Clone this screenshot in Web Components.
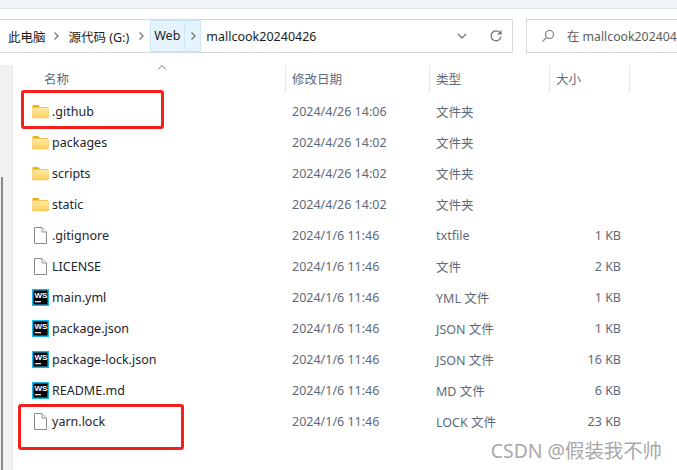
<!DOCTYPE html>
<html>
<head>
<meta charset="utf-8">
<style>
  html, body { margin: 0; padding: 0; background: #fff; }
  body { width: 677px; height: 470px; overflow: hidden; font-family: "Noto Sans", "Noto Sans CJK SC", sans-serif; }
</style>
</head>
<body>
<explorer-window>
  <nav-bar slot="nav" folder="mallcook20240426"></nav-bar>
  <file-list slot="list">
    <file-row icon="folder" name=".github" date="2024/4/26 14:06" type="文件夹"></file-row>
    <file-row icon="folder" name="packages" date="2024/4/26 14:02" type="文件夹"></file-row>
    <file-row icon="folder" name="scripts" date="2024/4/26 14:02" type="文件夹"></file-row>
    <file-row icon="folder" name="static" date="2024/4/26 14:02" type="文件夹"></file-row>
    <file-row icon="file" name=".gitignore" date="2024/1/6 11:46" type="txtfile" size="1 KB"></file-row>
    <file-row icon="file" name="LICENSE" date="2024/1/6 11:46" type="文件" size="2 KB"></file-row>
    <file-row icon="ws" name="main.yml" date="2024/1/6 11:46" type="YML 文件" size="1 KB"></file-row>
    <file-row icon="ws" name="package.json" date="2024/1/6 11:46" type="JSON 文件" size="1 KB"></file-row>
    <file-row icon="ws" name="package-lock.json" date="2024/1/6 11:46" type="JSON 文件" size="16 KB"></file-row>
    <file-row icon="ws" name="README.md" date="2024/1/6 11:46" type="MD 文件" size="6 KB"></file-row>
    <file-row icon="file" name="yarn.lock" date="2024/1/6 11:46" type="LOCK 文件" size="23 KB"></file-row>
  </file-list>
  <red-mark style="left:21px;top:90px;width:143px;height:39px"></red-mark>
  <red-mark style="left:18px;top:404px;width:166px;height:46px"></red-mark>
  <water-mark>CSDN @假装我不帅</water-mark>
</explorer-window>

<script>
class ExplorerWindow extends HTMLElement {
    constructor() {
        super();
        this.attachShadow({ mode: 'open' });
        this.shadowRoot.innerHTML = `
            <style>
                :host { display: block; position: relative; width: 677px; height: 470px; overflow: hidden; background: #fff; }
                .strip { height: 8px; background: #eff4f9; border-bottom: 1px solid #dde4e8; }
                .nav { padding-top: 10px; }
                .body { display: flex; height: 405px; margin-top: 12px; }
                .side { width: 12px; flex: none; background: #f1f1f1; border-right: 1px solid #ececec; position: relative; }
                .thumb { position: absolute; left: 1px; top: 112px; bottom: 0; width: 2px; background: #8b8b8b; }
                .list { flex: 1; min-width: 0; }
            </style>
            <div class="strip"></div>
            <div class="nav"><slot name="nav"></slot></div>
            <div class="body">
                <div class="side"><div class="thumb"></div></div>
                <div class="list"><slot name="list"></slot></div>
            </div>
            <slot></slot>
        `;
    }
}

class NavBar extends HTMLElement {
    constructor() {
        super();
        this.attachShadow({ mode: 'open' });
    }

    connectedCallback() {
        const folder = this.getAttribute('folder');
        const chevron = (cls) => `<svg class="sep ${cls}" width="8" height="10" viewBox="0 0 8 10"><path d="M2.5 1.5 6 5 2.5 8.500" fill="none" stroke="#777" stroke-width="1.300"/></svg>`;
        this.shadowRoot.innerHTML = `
            <style>
                :host { display: flex; gap: 13px; height: 34px; font-size: 12.5px; color: #1c1c1c; }
                .path { flex: none; width: 513px; box-sizing: border-box; display: flex; align-items: center; border: 1px solid #d9d9d9; border-left: none; padding-left: 8px; }
                .crumb { display: flex; align-items: center; height: 32px; }
                .sep { flex: none; }
                .a { margin: 0 9px 0 6px; }
                .b { margin: 0 5px 0 8px; }
                .c { margin: 0 4px; }
                .web { display: flex; align-items: center; height: 32px; background: #e5f3fd; box-shadow: inset 0 0 0 1px #cce8fb; }
                .web span { padding: 0 4px; border-right: 1px solid #cce8fb; line-height: 32px; }
                .current { margin-left: 5px; }
                .right { margin-left: auto; display: flex; align-items: center; gap: 22px; padding-right: 9px; }
                .search { flex: 1; min-width: 0; box-sizing: border-box; display: flex; align-items: center; gap: 12px; border: 1px solid #d9d9d9; border-right: none; padding-left: 14px; white-space: nowrap; overflow: hidden; color: #5c5c5c; font-size: 12.3px; }
                .search svg { flex: none; }
            </style>
            <div class="path">
                <span class="crumb">此电脑</span>${chevron('a')}
                <span class="crumb">源代码 (G:)</span>${chevron('b')}
                <div class="web"><span>Web</span>${chevron('c')}</div>
                <span class="current">${folder}</span>
                <div class="right">
                    <svg width="10" height="8" viewBox="0 0 10 8"><path d="M1 2 5 6 9 2" fill="none" stroke="#666" stroke-width="1.100"/></svg>
                    <svg width="14" height="14" viewBox="0 0 14 14"><path d="M12 7.500A5 5 0 1 1 10.500 3.200L12 4.700M12 1.300V4.800H8.700" fill="none" stroke="#6e6e6e" stroke-width="1.200"/></svg>
                </div>
            </div>
            <div class="search">
                <svg width="14" height="14" viewBox="0 0 14 14"><circle cx="8.500" cy="5.500" r="4" fill="none" stroke="#777" stroke-width="1.100"/><path d="M5.500 8.500 1.500 12.500" stroke="#a98c6e" stroke-width="1.300"/></svg>
                <span>在 mallcook202404</span>
            </div>
        `;
    }
}

class FileList extends HTMLElement {
    constructor() {
        super();
        this.attachShadow({ mode: 'open' });
        this.shadowRoot.innerHTML = `
            <style>
                :host { display: block; font-size: 12.5px; color: #5f6a78; }
                .head { display: grid; grid-template-columns: 273px 144px 120px 80px; height: 27px; position: relative; }
                .col { display: flex; align-items: center; border-right: 1px solid #e6e6e6; padding-left: 6px; }
                .col:first-of-type { padding-left: 31px; }
                .sort { position: absolute; left: 144px; top: -1px; }
                .rows { padding-top: 4px; }
            </style>
            <div class="head">
                <div class="col">名称</div>
                <div class="col">修改日期</div>
                <div class="col">类型</div>
                <div class="col">大小</div>
                <svg class="sort" width="10" height="7" viewBox="0 0 10 7"><path d="M1 5.500 5 1.500 9 5.500" fill="none" stroke="#777" stroke-width="1"/></svg>
            </div>
            <div class="rows"><slot></slot></div>
        `;
    }
}

class FileRow extends HTMLElement {
    constructor() {
        super();
        this.attachShadow({ mode: 'open' });
    }

    connectedCallback() {
        const attr = (n) => this.getAttribute(n) || '';
        this.shadowRoot.innerHTML = `
            <style>
                :host { display: grid; grid-template-columns: 273px 144px 120px 71px; height: 31px; align-items: center; white-space: nowrap; }
                .name { display: flex; align-items: center; gap: 3px; padding-left: 19px; color: #1c2530; }
                .date { padding-left: 6px; }
                .type { padding-left: 6px; }
                .size { text-align: right; }
            </style>
            <div class="name"><file-icon kind="${attr('icon')}"></file-icon><span>${attr('name')}</span></div>
            <div class="date">${attr('date')}</div>
            <div class="type">${attr('type')}</div>
            <div class="size">${attr('size')}</div>
        `;
    }
}

class FileIcon extends HTMLElement {
    constructor() {
        super();
        this.attachShadow({ mode: 'open' });
    }

    connectedCallback() {
        const kind = this.getAttribute('kind');
        let inner = '';
        if (kind === 'folder') {
            inner = `<svg width="17" height="17" viewBox="0 0 17 17">
                <defs><linearGradient id="g" x1="0" y1="0" x2="0" y2="1"><stop offset="0" stop-color="#ffeaa6"/><stop offset="1" stop-color="#fccf5c"/></linearGradient></defs>
                <path d="M0.500 3C0.500 2.400 1 2 1.500 2H6L8 4H16V6H0.500Z" fill="#f2ae12"/>
                <rect x="0.500" y="4.500" width="16" height="10.500" rx="1" fill="url(#g)" stroke="#f0c14e" stroke-width="0.500"/>
            </svg>`;
        } else if (kind === 'file') {
            inner = `<svg width="17" height="17" viewBox="0 0 17 17">
                <path d="M2.500 0.500H10L14.500 5V16.500H2.500Z" fill="#fdfdfd" stroke="#8a8a8a" stroke-width="1"/>
                <path d="M10 0.500V5H14.500" fill="#eee" stroke="#9a9a9a" stroke-width="1"/>
            </svg>`;
        } else {
            inner = `<svg width="17" height="17" viewBox="0 0 17 17">
                <rect x="0.750" y="0.750" width="15.500" height="15.500" fill="#000" stroke="#19b5e8" stroke-width="1.500"/>
                <path d="M3 12.700H9" stroke="#fff" stroke-width="1.200"/>
            </svg><span class="ws">WS</span>`;
        }
        this.shadowRoot.innerHTML = `
            <style>
                :host { display: block; position: relative; width: 17px; height: 17px; flex: none; }
                svg { display: block; }
                .ws { position: absolute; left: 2.500px; top: 1.500px; font: bold 8px/9px "Liberation Sans", sans-serif; color: #fff; }
            </style>
            ${inner}
        `;
    }
}

class RedMark extends HTMLElement {
    constructor() {
        super();
        this.attachShadow({ mode: 'open' });
        this.shadowRoot.innerHTML = `
            <style>
                :host { display: block; position: absolute; box-sizing: border-box; border: 3px solid #f5201b; border-radius: 3px; }
            </style>
        `;
    }
}

class WaterMark extends HTMLElement {
    constructor() {
        super();
        this.attachShadow({ mode: 'open' });
        this.shadowRoot.innerHTML = `
            <style>
                :host { display: block; position: absolute; right: 15px; top: 438px; font-size: 19.4px; line-height: 26px; color: #a8a8a8; white-space: nowrap; }
            </style>
            <slot></slot>
        `;
    }
}

customElements.define('explorer-window', ExplorerWindow);
customElements.define('nav-bar', NavBar);
customElements.define('file-list', FileList);
customElements.define('file-row', FileRow);
customElements.define('file-icon', FileIcon);
customElements.define('red-mark', RedMark);
customElements.define('water-mark', WaterMark);
</script>
</body>
</html>
